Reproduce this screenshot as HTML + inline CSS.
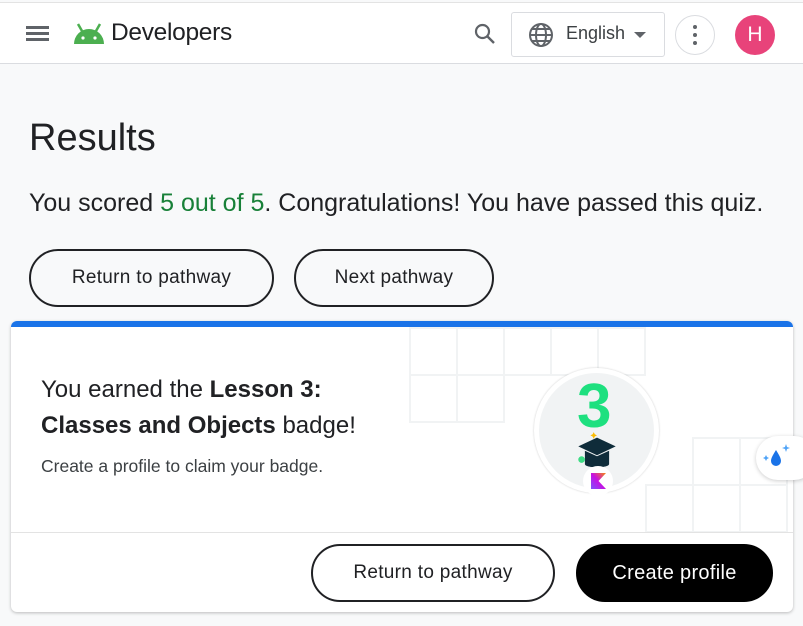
<!DOCTYPE html>
<html><head><meta charset="utf-8"><style>
*{box-sizing:border-box;margin:0;padding:0}
body{width:803px;height:626px;background:#f8f9fa;font-family:"Liberation Sans",sans-serif;color:#202124;position:relative;overflow:hidden}
.hdr{position:absolute;left:0;top:2px;width:803px;height:62px;background:#fff;border-top:1px solid #e3e3e3;border-bottom:1px solid #dadce0}
.abs{position:absolute}
.btn{position:absolute;border:2px solid #202124;border-radius:30px;display:flex;align-items:center;justify-content:center;font-size:19px;letter-spacing:.3px;color:#202124;background:transparent}
.card{position:absolute;left:11px;top:321px;width:782px;height:291px;background:#fff;border-radius:6px;box-shadow:0 1px 3px rgba(0,0,0,.25);overflow:hidden}
.g{position:absolute;border:2px solid #f1f3f4;width:49px;height:49px}
</style></head><body>
<div class="hdr">
  <div class="abs" style="left:26px;top:23px;width:23px;height:2.5px;background:#5f6368;box-shadow:0 6px 0 #5f6368,0 12px 0 #5f6368"></div>
  <svg class="abs" style="left:72px;top:20px" width="34" height="22" viewBox="0 0 34 22"><path d="M2 21 A15 15 0 0 1 32 21 Z" style="fill:#4caf50"/><line x1="6" y1="1" x2="10" y2="8" stroke="#4caf50" stroke-width="2.5"/><line x1="28" y1="1" x2="24" y2="8" stroke="#4caf50" stroke-width="2.5"/><circle cx="11" cy="15" r="1.6" fill="#fff"/><circle cx="23" cy="15" r="1.6" fill="#fff"/></svg>
  <div class="abs" style="left:111px;top:16px;font-size:24.5px;color:#202124;letter-spacing:-.3px">Developers</div>
  <svg class="abs" style="left:473px;top:19px" width="24" height="24" viewBox="0 0 24 24"><circle cx="9.5" cy="9.5" r="6.5" fill="none" stroke="#5f6368" stroke-width="2.2"/><line x1="14.5" y1="14.5" x2="21" y2="21" stroke="#5f6368" stroke-width="2.4"/></svg>
  <div class="abs" style="left:511px;top:9px;width:154px;height:45px;border:1px solid #dadce0;border-radius:3px"></div>
  <svg class="abs" style="left:528px;top:19px" width="26" height="26" viewBox="0 0 26 26" fill="none" stroke="#5f6368" stroke-width="2"><circle cx="13" cy="13" r="11"/><ellipse cx="13" cy="13" rx="5" ry="11"/><line x1="2" y1="13" x2="24" y2="13"/><path d="M4 7h18M4 19h18"/></svg>
  <div class="abs" style="left:566px;top:20px;font-size:18px;color:#3c4043">English</div>
  <div class="abs" style="left:634px;top:29px;border-left:6px solid transparent;border-right:6px solid transparent;border-top:6px solid #5f6368"></div>
  <div class="abs" style="left:675px;top:12px;width:40px;height:40px;border:1px solid #dadce0;border-radius:50%"></div>
  <div class="abs" style="left:693px;top:22px;width:4px;height:4px;border-radius:50%;background:#5f6368;box-shadow:0 8px 0 #5f6368,0 16px 0 #5f6368"></div>
  <div class="abs" style="left:735px;top:12px;width:40px;height:40px;border-radius:50%;background:#e8437a;color:#fff;font-size:21px;display:flex;align-items:center;justify-content:center">H</div>
</div>
<div class="abs" style="left:29px;top:117px;font-size:38px;color:#202124">Results</div>
<div class="abs" style="left:29px;top:189px;font-size:25px;color:#202124;white-space:nowrap">You scored <span style="color:#188038">5 out of 5</span>. Congratulations! You have passed this quiz.</div>
<div class="btn" style="left:29px;top:249px;width:245px;height:58px">Return to pathway</div>
<div class="btn" style="left:294px;top:249px;width:200px;height:58px">Next pathway</div>
<div class="card">
  <div class="g" style="left:398px;top:6px"></div><div class="g" style="left:445px;top:6px"></div><div class="g" style="left:492px;top:6px"></div><div class="g" style="left:539px;top:6px"></div><div class="g" style="left:586px;top:6px"></div>
  <div class="g" style="left:398px;top:53px"></div><div class="g" style="left:445px;top:53px"></div>
  <div class="g" style="left:681px;top:116px"></div><div class="g" style="left:728px;top:116px"></div>
  <div class="g" style="left:634px;top:163px"></div><div class="g" style="left:681px;top:163px"></div><div class="g" style="left:728px;top:163px"></div>
  <div class="abs" style="left:0;top:0;width:782px;height:6px;background:#1a73e8"></div>
  <div class="abs" style="left:30px;top:51px;font-size:24px;line-height:36px;color:#202124">You earned the <b style="font-weight:600">Lesson 3:<br>Classes and Objects</b> badge!</div>
  <div class="abs" style="left:30px;top:135px;font-size:17.5px;color:#3c4043">Create a profile to claim your badge.</div>
  <div class="abs" style="left:523px;top:47px;width:125px;height:125px;border-radius:50%;background:#f1f3f4;border:5px solid #fff;box-shadow:0 0 2px rgba(0,0,0,.2)"></div>
  <div class="abs" style="left:566px;top:50px;font-size:62px;font-weight:bold;color:#1ee07f">3</div>
  <svg class="abs" style="left:565px;top:110px" width="42" height="44" viewBox="0 0 38 40"><path d="M19 6 L36 14 L19 22 L2 14Z" fill="#0f2c3a"/><path d="M8 18v12c0 4 22 4 22 0V18l-11 5z" fill="#0f2c3a"/><circle cx="5" cy="26" r="3" fill="#3ddc84"/><path d="M16 1l1 2 2 1-2 1-1 2-1-2-2-1 2-1z" fill="#fbbc04"/></svg>
  <div class="abs" style="left:572px;top:145px;width:30px;height:30px;border-radius:50%;background:#fff"></div>
  <svg class="abs" style="left:580px;top:152px" width="15" height="16" viewBox="0 0 15 16"><defs><linearGradient id="k" x1="0" y1="1" x2="1" y2="0"><stop offset="0" stop-color="#7f52ff"/><stop offset=".5" stop-color="#c711e1"/><stop offset="1" stop-color="#f88909"/></linearGradient></defs><path d="M0 0h15L7.5 8 15 16H0z" fill="url(#k)"/></svg>
  <div class="abs" style="left:0;top:211px;width:782px;height:1px;background:#e3e3e3"></div>
  <div class="btn" style="left:300px;top:223px;width:244px;height:58px">Return to pathway</div>
  <div class="btn" style="left:565px;top:223px;width:197px;height:58px;background:#000;border-color:#000;color:#fff;font-size:20px">Create profile</div>
</div>
<div class="abs" style="left:756px;top:436px;width:60px;height:44px;border-radius:22px;background:#fff;box-shadow:0 1px 4px rgba(0,0,0,.2)"></div>
<svg class="abs" style="left:762px;top:444px" width="30" height="28" viewBox="0 0 30 28"><path d="M14 6c3 5 5 8 5 11a5 5 0 0 1-10 0c0-3 2-6 5-11z" fill="#1a73e8"/><path d="M24 0l1 3 3 1-3 1-1 3-1-3-3-1 3-1z" fill="#4fa3f7"/><path d="M4 11l1 2 2 1-2 1-1 2-1-2-2-1 2-1z" fill="#4fa3f7"/></svg>
</body></html>
